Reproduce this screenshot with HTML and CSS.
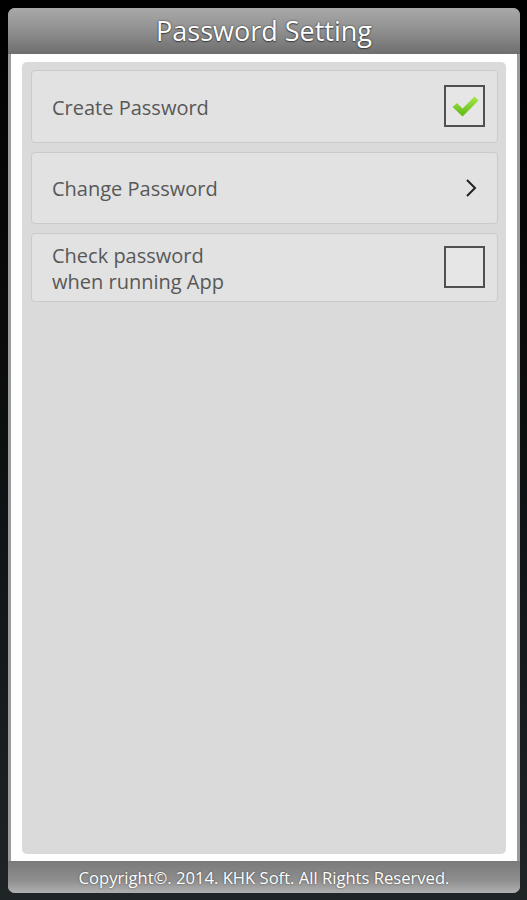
FILE: index.html
```html
<!DOCTYPE html>
<html>
<head>
<meta charset="utf-8">
<link rel="stylesheet" href="styles.css">
</head>
<body>
<div class="frame">
  <div class="header">Password Setting</div>
  <div class="content">
    <div class="panel">
      <div class="row row-1">
        <span class="label">Create Password</span>
        <span class="check checked">
          <svg width="30" height="26" viewBox="0 0 30 26">
            <defs>
              <linearGradient id="g" x1="0" y1="0" x2="0" y2="1">
                <stop offset="0" stop-color="#a6e84a"/>
                <stop offset="1" stop-color="#5cb814"/>
              </linearGradient>
            </defs>
            <path d="M2.5 14 L7 10 L12.5 15.5 L24.5 3.5 L28.5 7.5 L12.5 23.5 Z" fill="url(#g)"/>
          </svg>
        </span>
      </div>
      <div class="row row-2">
        <span class="label">Change Password</span>
        <svg class="chev" width="12" height="20" viewBox="0 0 12 20">
          <path d="M2 2 L10 10 L2 18" fill="none" stroke="#222" stroke-width="2"/>
        </svg>
      </div>
      <div class="row row-3">
        <span class="label">Check password<br>when running App</span>
        <span class="check"></span>
      </div>
    </div>
  </div>
  <div class="footer">Copyright©. 2014. KHK Soft. All Rights Reserved.</div>
</div>
</body>
</html>
```

FILE: styles.css
```css
html, body {
  margin: 0;
  padding: 0;
}
body {
  width: 527px;
  height: 900px;
  background: linear-gradient(to bottom, #000000 0%, #0a0c0d 40%, #1f2427 100%);
  font-family: "Open Sans", "Noto Sans", sans-serif;
  overflow: hidden;
}
.frame {
  margin: 8px 7px 0 8px;
  width: 512px;
  height: 885px;
  display: flex;
  flex-direction: column;
  background: linear-gradient(to right, #9a9a9a, #b8b8b8 50%, #9a9a9a);
  border-radius: 7px;
  overflow: hidden;
}
.header {
  height: 46px;
  flex: none;
  background: linear-gradient(to bottom, #a9a9a9 0%, #8f8f8f 50%, #6e6e6e 100%);
  color: #ffffff;
  font-size: 27px;
  line-height: 46px;
  text-align: center;
  text-shadow: 0 0 2px #333, 0 1px 1px #444;
}
.content {
  flex: 1;
  margin: 0 3px;
  background: #ffffff;
  padding: 8px 11px 7px 11px;
  display: flex;
}
.panel {
  flex: 1;
  background: #dadada;
  border-radius: 5px;
  padding: 8px 8px 8px 9px;
  display: flex;
  flex-direction: column;
  gap: 9px;
}
.row {
  display: flex;
  align-items: center;
  justify-content: space-between;
  background: #e2e2e2;
  border: 1px solid #cacaca;
  border-radius: 4px;
  padding: 0 12px 0 20px;
}
.row-1 { height: 71px; }
.row-2 { height: 70px; padding-right: 20px; }
.row-3 { height: 67px; }
.label {
  color: #585858;
  font-size: 20px;
  line-height: 26px;
  padding-top: 2px;
}
.check {
  width: 37px;
  height: 38px;
  border: 2px solid #505050;
  background: #e6e6e6;
  display: flex;
  align-items: center;
  justify-content: center;
}
.row-1 .check { margin-top: -1px; }
.row-3 .check { margin-top: -2px; }
.chev { display: block; }
.footer {
  height: 32px;
  flex: none;
  background: linear-gradient(to bottom, #7a7a7a 0%, #8e8e8e 60%, #b0b0b0 100%);
  color: #ffffff;
  font-size: 16.6px;
  line-height: 34px;
  text-align: center;
  text-shadow: 0 0 2px #444;
}
```
